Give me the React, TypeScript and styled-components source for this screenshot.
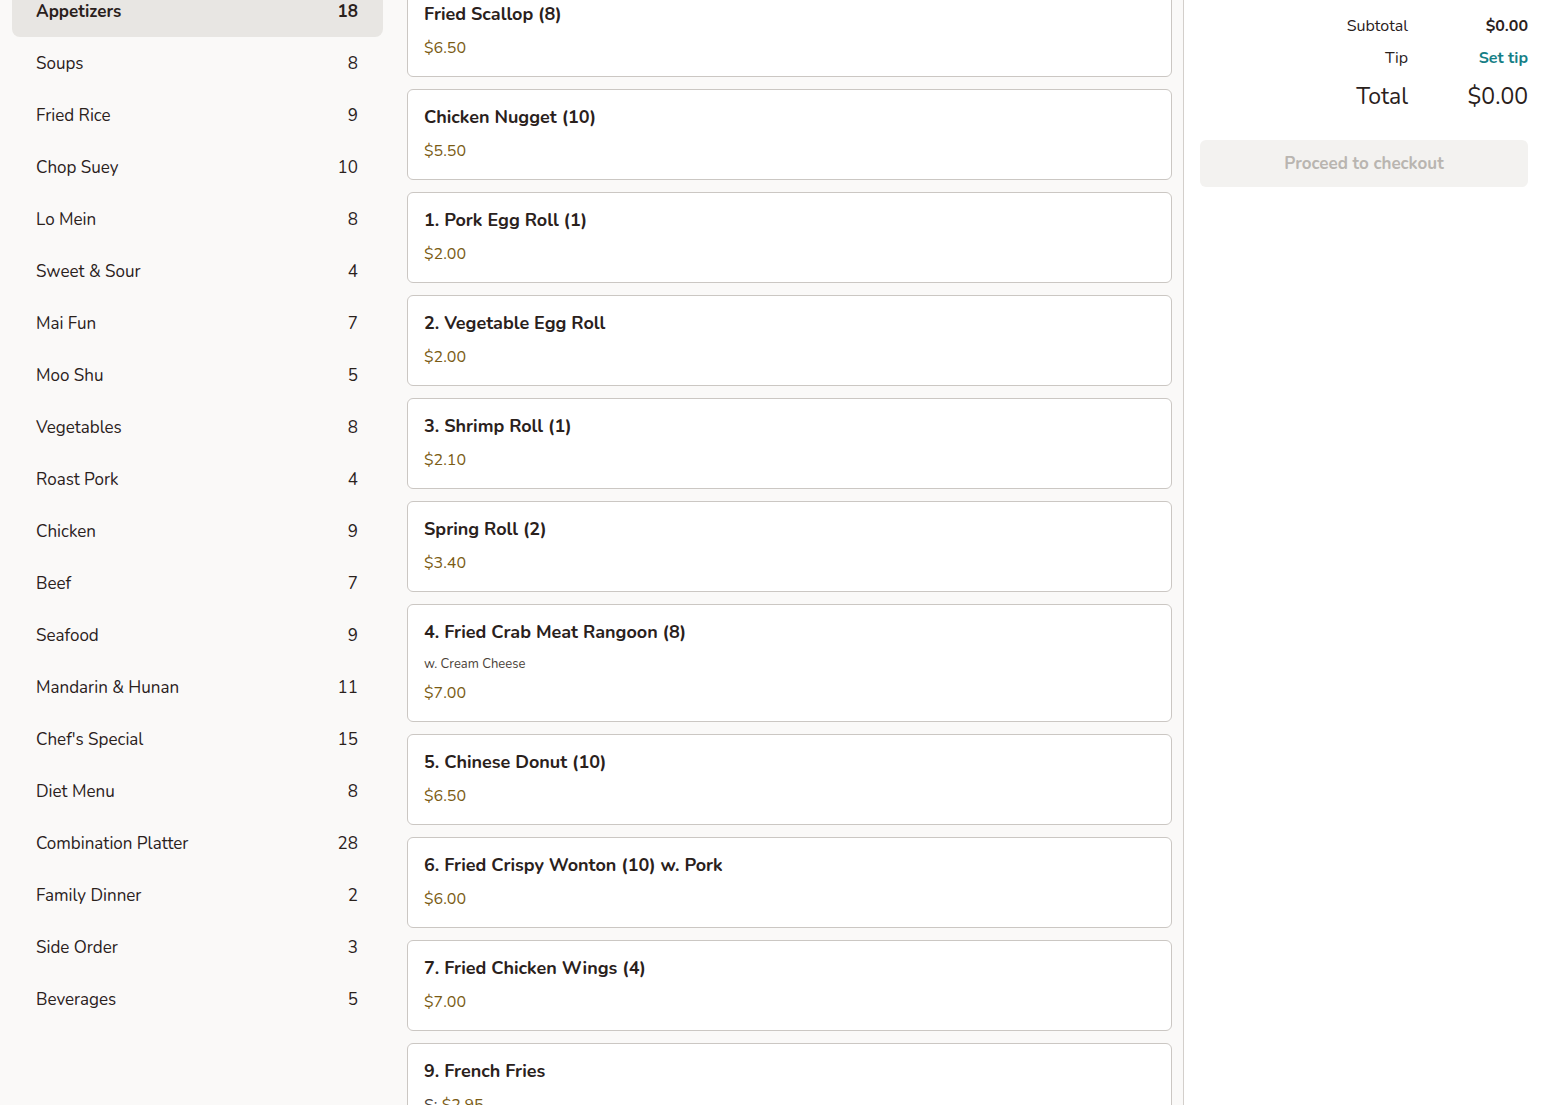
import styled, { createGlobalStyle } from 'styled-components'

const GlobalStyle = createGlobalStyle`
  html, body {
    margin: 0;
    padding: 0;
    background: #faf9f8;
    font-family: "Nunito", Lato, "Noto Sans", sans-serif;
    color: #2a211c;
    overflow: hidden;
  }
`

const categories: [string, number][] = [
  ['Appetizers', 18],
  ['Soups', 8],
  ['Fried Rice', 9],
  ['Chop Suey', 10],
  ['Lo Mein', 8],
  ['Sweet & Sour', 4],
  ['Mai Fun', 7],
  ['Moo Shu', 5],
  ['Vegetables', 8],
  ['Roast Pork', 4],
  ['Chicken', 9],
  ['Beef', 7],
  ['Seafood', 9],
  ['Mandarin & Hunan', 11],
  ["Chef's Special", 15],
  ['Diet Menu', 8],
  ['Combination Platter', 28],
  ['Family Dinner', 2],
  ['Side Order', 3],
  ['Beverages', 5],
]

type Item = { name: string; price: string; desc?: string; size?: string }

const items: Item[] = [
  { name: 'Fried Scallop (8)', price: '$6.50' },
  { name: 'Chicken Nugget (10)', price: '$5.50' },
  { name: '1. Pork Egg Roll (1)', price: '$2.00' },
  { name: '2. Vegetable Egg Roll', price: '$2.00' },
  { name: '3. Shrimp Roll (1)', price: '$2.10' },
  { name: 'Spring Roll (2)', price: '$3.40' },
  { name: '4. Fried Crab Meat Rangoon (8)', price: '$7.00', desc: 'w. Cream Cheese' },
  { name: '5. Chinese Donut (10)', price: '$6.50' },
  { name: '6. Fried Crispy Wonton (10) w. Pork', price: '$6.00' },
  { name: '7. Fried Chicken Wings (4)', price: '$7.00' },
  { name: '9. French Fries', price: '$2.95', size: 'S: ' },
]

const Layout = styled.div`
  display: grid;
  grid-template-columns: 395px 789px 1fr;
  height: 1105px;
  overflow: hidden;
`

// sidebar and menu are scrolled a little past their top
const Sidebar = styled.nav`
  padding: 0 12px;
  margin-top: -15px;
`

const CatRow = styled.div<{ $active?: boolean }>`
  display: flex;
  align-items: center;
  justify-content: space-between;
  height: 52px;
  padding: 0 25px 0 24px;
  border-radius: 8px;
  font-size: 17px;
  font-weight: ${({ $active }) => ($active ? 700 : 400)};
  background: ${({ $active }) => ($active ? '#e8e6e3' : 'transparent')};
  color: #2a211c;
`

const MenuColumn = styled.main`
  display: flex;
  flex-direction: column;
  gap: 12px;
  padding: 0 11px 0 12px;
  margin-top: -14px;
  border-right: 1px solid #d3cfcb;
`

const Card = styled.div`
  background: #fff;
  border: 1px solid #cbc7c3;
  border-radius: 6px;
  padding: 15px 16px 18px;
  display: flex;
  flex-direction: column;
`

const Title = styled.div`
  font-size: 18px;
  font-weight: 700;
  line-height: 24px;
  color: #2a211c;
`

const Desc = styled.div`
  font-size: 13px;
  line-height: 18px;
  margin-top: 11px;
  color: #4a3f38;
`

const Price = styled.div<{ $tight?: boolean }>`
  font-size: 16px;
  line-height: 20px;
  margin-top: ${({ $tight }) => ($tight ? '10px' : '12px')};
  color: #7a5b14;
`

const Size = styled.span`
  color: #4a3f38;
`

const Cart = styled.aside`
  background: #fff;
  padding: 10px 16px 0;
`

const SumRow = styled.div<{ $big?: boolean }>`
  display: grid;
  grid-template-columns: 1fr 120px;
  align-items: center;
  height: ${({ $big }) => ($big ? '44px' : '32px')};
  font-size: ${({ $big }) => ($big ? '23px' : '16px')};
  text-align: right;
  color: #2a211c;
`

const Value = styled.span<{ $bold?: boolean; $link?: boolean }>`
  font-weight: ${({ $bold }) => ($bold ? 700 : 400)};
  color: ${({ $link }) => ($link ? '#167f86' : '#2a211c')};
`

const Checkout = styled.button`
  width: 100%;
  height: 47px;
  margin-top: 22px;
  border: none;
  border-radius: 6px;
  background: #f3f2f0;
  color: #b9b5b0;
  font-family: inherit;
  font-size: 17px;
  font-weight: 700;
`

export default function App() {
  return (
    <>
      <GlobalStyle />
      <Layout>
        <Sidebar>
          {categories.map(([name, count], i) => (
            <CatRow key={name} $active={i === 0}>
              <span>{name}</span>
              <span>{count}</span>
            </CatRow>
          ))}
        </Sidebar>
        <MenuColumn>
          {items.map((it) => (
            <Card key={it.name}>
              <Title>{it.name}</Title>
              {it.desc && <Desc>{it.desc}</Desc>}
              <Price $tight={!!it.desc}>
                {it.size && <Size>{it.size}</Size>}
                {it.price}
              </Price>
            </Card>
          ))}
        </MenuColumn>
        <Cart>
          <SumRow>
            <span>Subtotal</span>
            <Value $bold>$0.00</Value>
          </SumRow>
          <SumRow>
            <span>Tip</span>
            <Value $bold $link>Set tip</Value>
          </SumRow>
          <SumRow $big>
            <span>Total</span>
            <Value>$0.00</Value>
          </SumRow>
          <Checkout>Proceed to checkout</Checkout>
        </Cart>
      </Layout>
    </>
  )
}
